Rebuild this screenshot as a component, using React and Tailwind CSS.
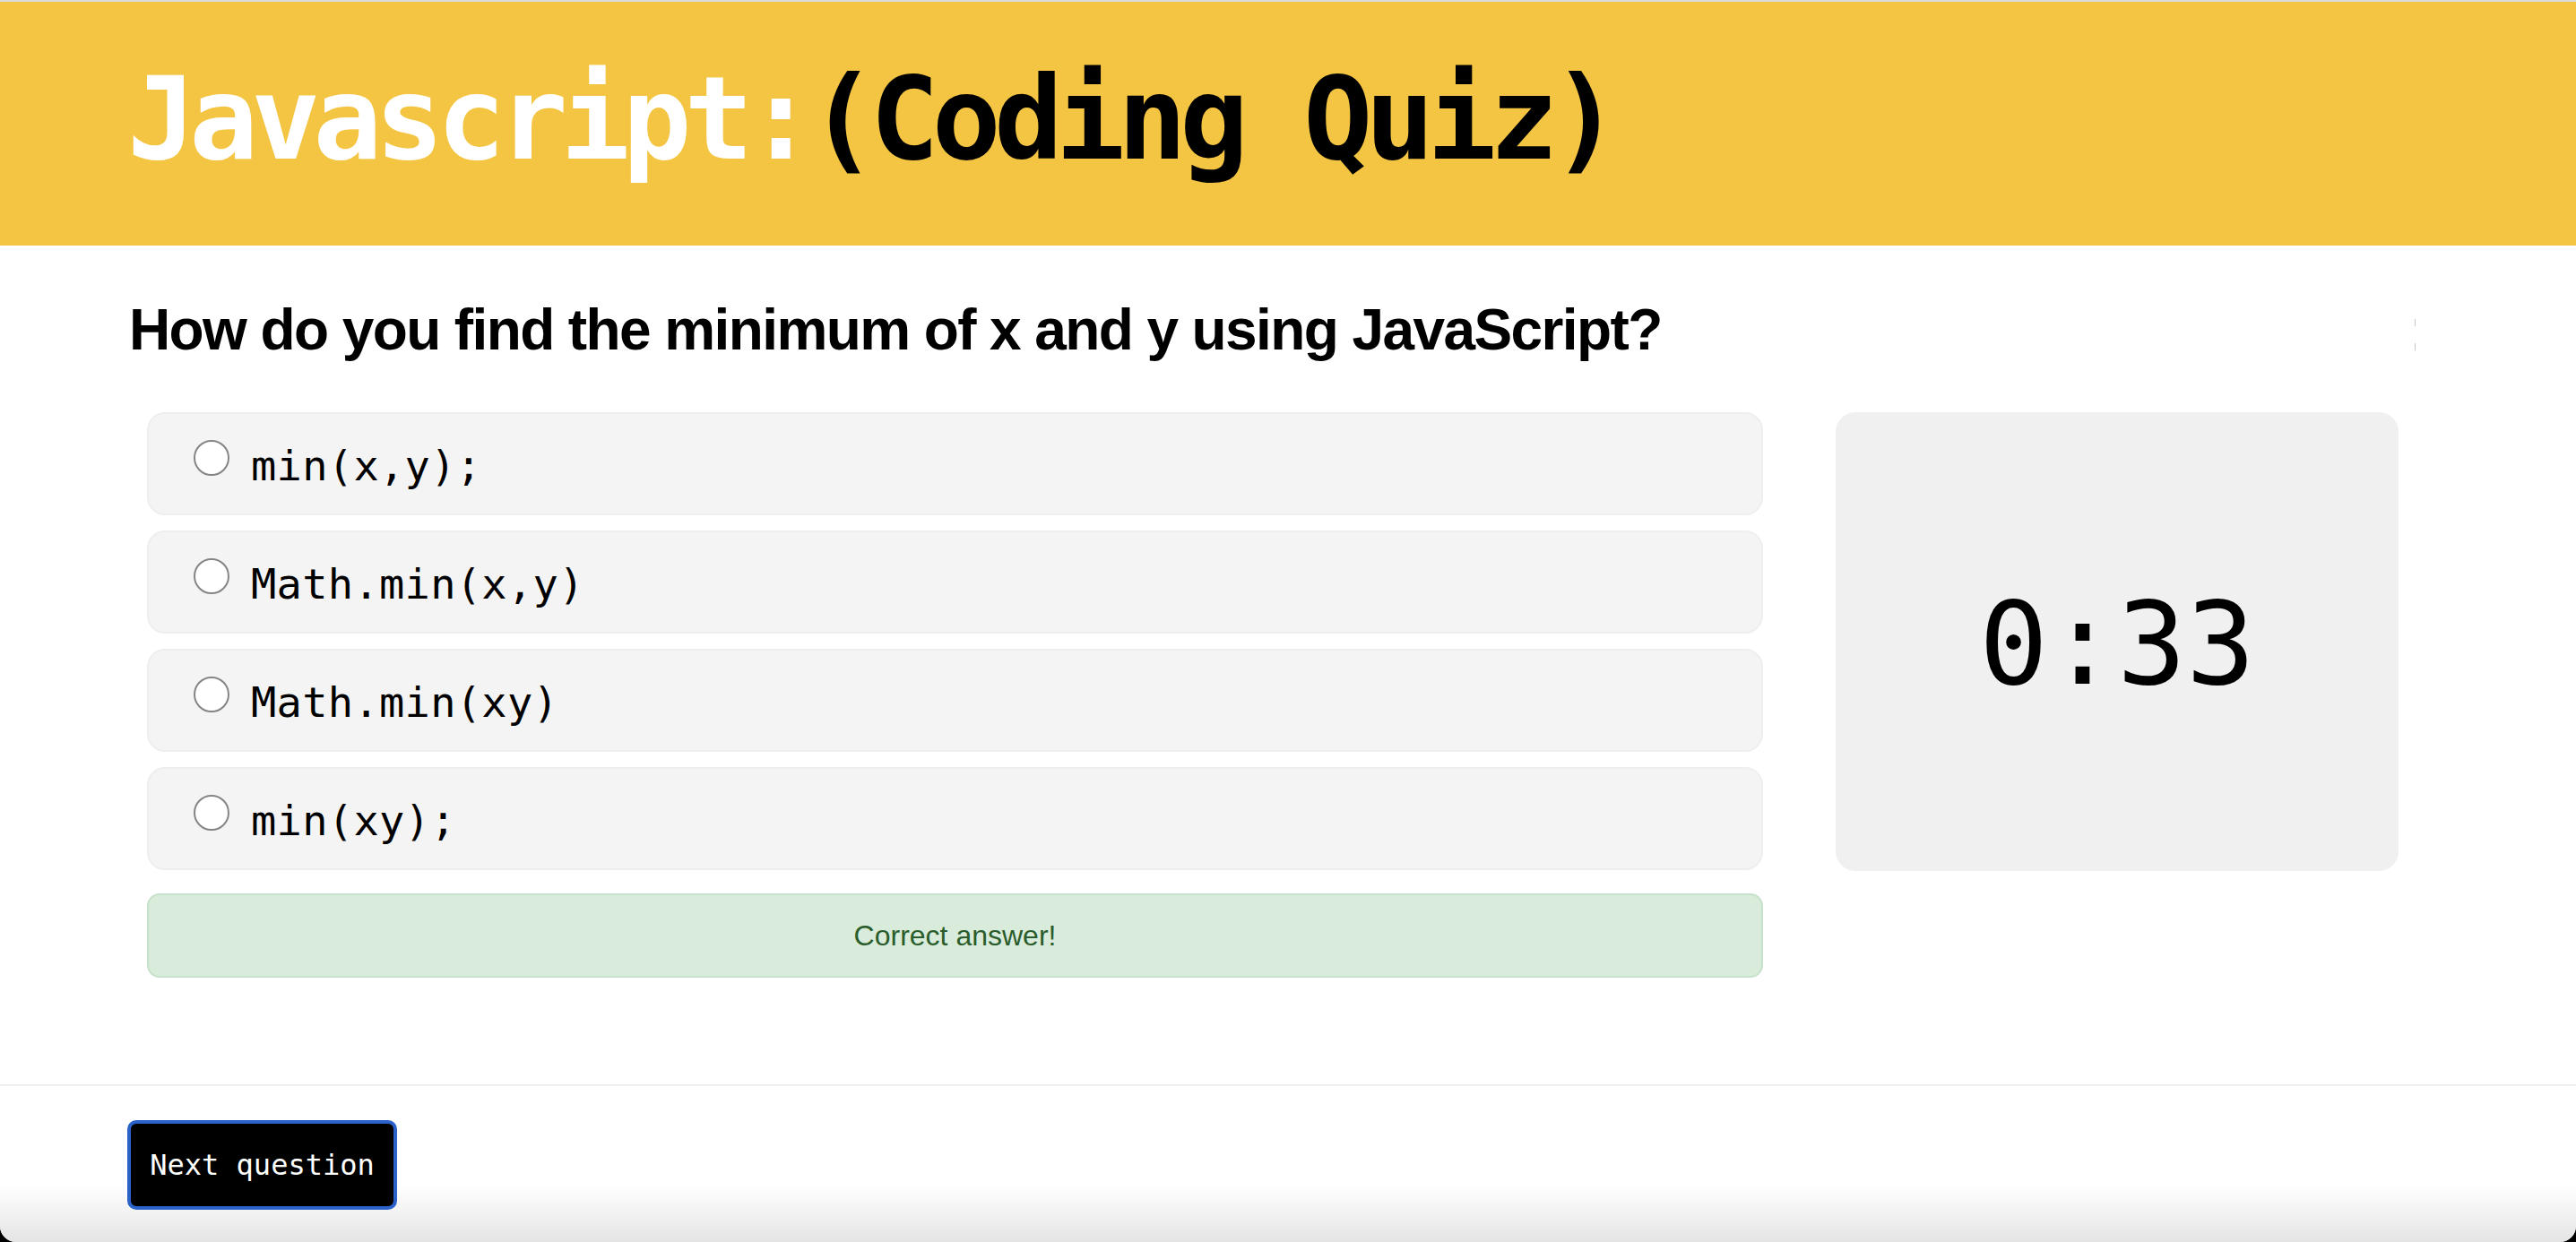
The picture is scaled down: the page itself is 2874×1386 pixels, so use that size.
import { useState } from 'react'

const options = ['min(x,y);', 'Math.min(x,y)', 'Math.min(xy)', 'min(xy);']

function App() {
  const [selected, setSelected] = useState(null)

  return (
    <div className="min-h-screen bg-black">
      <div className="bg-white rounded-b-[18px] overflow-hidden h-[1386px] flex flex-col">

        {/* Yellow title bar */}
        <header className="h-[274px] shrink-0 border-t-2 border-[#dcdcdc] bg-[#f4c543] pt-[67px] px-[142px]">
          <h1 className="font-['DejaVu_Sans_Mono',monospace] text-[128px] leading-none font-bold tracking-[-8px] whitespace-nowrap">
            <span className="text-white">Javascript:</span>
            <span className="text-black">(Coding Quiz)</span>
          </h1>
        </header>

        {/* Question + answers + timer */}
        <main className="flex-1 px-[144px] pt-[62px]">
          <div className="flex items-start">
            <h2 className="font-['Liberation_Sans',Arial,sans-serif] text-[64px] leading-none font-bold tracking-[-1.6px] text-black whitespace-nowrap">
              How do you find the minimum of x and y using JavaScript?
            </h2>
            <div className="ml-auto mr-[35px] mt-[20px] flex flex-col gap-[19px]">
              <div className="w-px h-[8px] bg-[#c4c4c4]" />
              <div className="w-px h-[8px] bg-[#c4c4c4]" />
            </div>
          </div>

          <div className="flex items-start mt-[60px]">
            <div className="ml-[20px] w-[1803px] flex flex-col gap-[17px]">
              {options.map((opt, i) => (
                <label
                  key={opt}
                  onClick={() => setSelected(i)}
                  className="h-[115px] bg-[#f4f4f4] border-2 border-[#eeeeee] rounded-[20px] pl-[50px] pt-[29px] flex items-start cursor-pointer"
                >
                  <span className="w-[40px] h-[40px] rounded-full border-2 border-[#858585] bg-white shrink-0 flex items-center justify-center">
                    {selected === i && <span className="w-[22px] h-[22px] rounded-full bg-[#2a62c9]" />}
                  </span>
                  <span className="ml-[24px] mt-[5px] font-['DejaVu_Sans_Mono',monospace] text-[47px] leading-none tracking-[0.3px] text-black">
                    {opt}
                  </span>
                </label>
              ))}

              <div className="mt-[9px] h-[94px] bg-[#d9ecdb] border-2 border-[#c6e2ca] rounded-[14px] flex items-center justify-center">
                <span className="font-['Liberation_Sans',Arial,sans-serif] text-[32px] text-[#2b5c2c]">
                  Correct answer!
                </span>
              </div>
            </div>

            {/* Countdown */}
            <div className="ml-[81px] w-[628px] h-[512px] bg-[#f0f0f0] rounded-[22px] flex items-center justify-center">
              <span className="font-['DejaVu_Sans_Mono',monospace] text-[128px] leading-none text-black mt-[6px]">
                0:33
              </span>
            </div>
          </div>
        </main>

        {/* Footer with next button */}
        <footer className="h-[176px] shrink-0 border-t-2 border-[#eeeeee] pt-[38px] px-[142px] bg-linear-to-b from-white from-[64%] to-[#e4e4e4]">
          <button className="w-[301px] h-[100px] bg-black border-4 border-[#2a62c9] rounded-[10px] text-white font-['DejaVu_Sans_Mono',monospace] text-[32px] leading-none">
            Next question
          </button>
        </footer>

      </div>
    </div>
  )
}

export default App
